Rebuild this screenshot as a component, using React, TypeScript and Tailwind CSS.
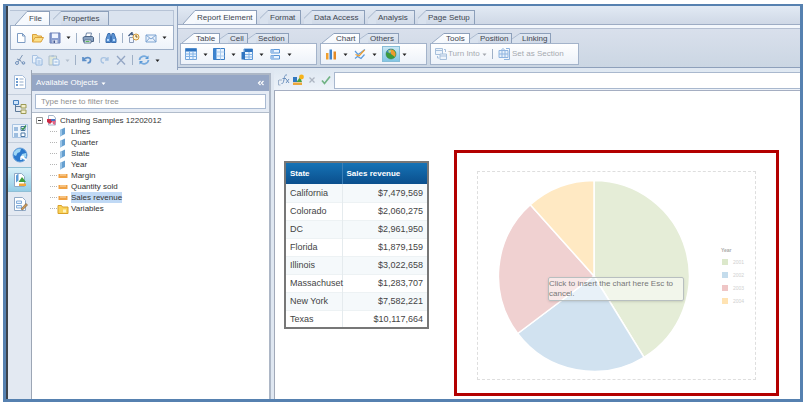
import type { ReactNode } from 'react';

const dimensions = ['Lines', 'Quarter', 'State', 'Year'];
const measures = ['Margin', 'Quantity sold', 'Sales revenue'];

const sales = [
  { state: 'California', revenue: '$7,479,569' },
  { state: 'Colorado', revenue: '$2,060,275' },
  { state: 'DC', revenue: '$2,961,950' },
  { state: 'Florida', revenue: '$1,879,159' },
  { state: 'Illinois', revenue: '$3,022,658' },
  { state: 'Massachuset', revenue: '$1,283,707' },
  { state: 'New York', revenue: '$7,582,221' },
  { state: 'Texas', revenue: '$10,117,664' },
];

const legend = [
  { year: '2001', color: 'bg-[#dce8cb]' },
  { year: '2002', color: 'bg-[#c4dcec]' },
  { year: '2003', color: 'bg-[#efc6c6]' },
  { year: '2004', color: 'bg-[#ffe3b3]' },
];

function Icon({ children, className = '' }: { children: ReactNode; className?: string }) {
  return (
    <svg viewBox="0 0 12 12" className={`w-3 h-3 shrink-0 ${className}`} fill="none" strokeWidth="1" aria-hidden="true">
      {children}
    </svg>
  );
}

function Tool({ label, children, className = '' }: { label: string; children: ReactNode; className?: string }) {
  return (
    <button type="button" aria-label={label} className={`flex items-center justify-center shrink-0 ${className}`}>
      {children}
    </button>
  );
}

function Caret({ className = 'fill-[#222]' }: { className?: string }) {
  return (
    <svg viewBox="0 0 5 5" className={`w-[5px] h-[5px] shrink-0 ${className}`} aria-hidden="true">
      <path d="M.5 1.5h4L2.5 4z" />
    </svg>
  );
}

function Separator() {
  return <span className="w-px h-2.5 shrink-0 bg-[#9fb0c6]" />;
}

function Tab({ label, active = false, className = '' }: { label: string; active?: boolean; className?: string }) {
  return (
    <button type="button" className={`flex items-stretch shrink-0 whitespace-nowrap text-[#3f4650] ${className}`}>
      <svg viewBox="0 0 12 15" preserveAspectRatio="none" className={`h-full shrink-0 ${active ? 'w-3' : 'w-2'}`} aria-hidden="true">
        {active ? (
          <>
            <path d="M0 15 12 0V15z" fill="#f6f9fd" />
            <path d="M0 15 12 .5" stroke="#8c9fba" fill="none" />
          </>
        ) : (
          <>
            <path d="M0 15V9L12 0V15z" fill="#d9e2ee" />
            <path d="M0 9 12 .5" stroke="#9aabc2" fill="none" />
          </>
        )}
      </svg>
      <span
        className={`flex-1 flex items-center pl-0.5 border-t border-r border-[#8c9fba] ${
          active ? 'bg-linear-to-b from-white to-[#f1f6fc]' : 'bg-linear-to-b from-[#e1e8f2] to-[#d0dae8]'
        }`}
      >
        {label}
      </span>
    </button>
  );
}

function ToolGroup({ tabs, children, className = '' }: { tabs: ReactNode; children: ReactNode; className?: string }) {
  return (
    <div className={`shrink-0 flex flex-col ${className}`}>
      <div className="h-2.5 flex">{tabs}</div>
      <div className="h-[22px] flex items-center border border-[#a3b3ca] bg-linear-to-b from-white to-[#edf2f9]">{children}</div>
    </div>
  );
}

function FilePanel() {
  return (
    <div className="w-[164px] shrink-0 mt-1 ml-0.5 flex flex-col">
      <div className="h-[15px] flex pl-[5px] border-t border-r border-[#b6c3d6] bg-[#dae3ef]">
        <Tab label="File" active className="w-[35px]" />
        <Tab label="Properties" className="w-[56px] ml-[3px]" />
      </div>
      <div className="h-[25px] flex items-center gap-[5px] pl-1 border border-[#9fb0c8] bg-linear-to-b from-white to-[#eef3fa]">
        <Tool label="New">
          <Icon><path d="M2.5 1.5h5l2.500 2.500v6.500h-7.500zM7.500 1.500v2.500H10" fill="#fff" stroke="#7d9cc4" /></Icon>
        </Tool>
        <Tool label="Open">
          <Icon>
            <path d="M.5 10V2.500h4l1 1.500h4V6" fill="#f7d678" stroke="#dba13c" />
            <path d="M.5 10 3 5.500h8.500L9 10z" fill="#fbe08a" stroke="#dba13c" />
          </Icon>
        </Tool>
        <Tool label="Save">
          <Icon>
            <path d="M1 1h10v10H1z" fill="#8b9fd0" stroke="#6a7fb5" />
            <path d="M3 1.500h6V6H3z" fill="#eef3ff" />
            <path d="M3.500 8h5v3h-5z" fill="#d5dcec" />
            <path d="M4.500 8.500h1.500V11H4.500z" fill="#42568f" />
          </Icon>
        </Tool>
        <Caret />
        <Separator />
        <Tool label="Print">
          <Icon>
            <path d="M3.500 5 4.500 1h5l-1 4" fill="#fff" stroke="#7188a8" />
            <path d="M1 5.500 3 4.500h7.500l1 1v4h-10z" fill="#8aa3c2" stroke="#4e6788" />
            <path d="M2.500 8h6.500v3H2z" fill="#fff" stroke="#5e7696" />
            <path d="M3.500 9.500h4" stroke="#5cb85c" />
          </Icon>
        </Tool>
        <Separator />
        <Tool label="Find">
          <Icon>
            <path d="M3 1.500h2l.5 3.500v5.500H1V7zM9 1.500H7L6.500 5v5.500H11V7z" fill="#5b93d4" stroke="#3b6fb0" />
            <path d="M2 8h2M8 8h2" stroke="#b9dcff" strokeWidth="2" />
          </Icon>
        </Tool>
        <Separator />
        <Tool label="History">
          <Icon>
            <path d="M1.500 5.500h4v5h-4z" fill="#eef4ff" stroke="#8a9bb7" />
            <circle cx="8" cy="5" r="3" fill="#fff3cf" stroke="#d39a3c" />
            <path d="M8 3v2h1.500" stroke="#7a5520" />
            <path d="M.5 4 4 .5v2h1.500" stroke="#39547d" strokeWidth="1.300" />
          </Icon>
        </Tool>
        <Tool label="Mail">
          <Icon>
            <path d="M1 3h10v7H1z" fill="#eaf2fc" stroke="#7fa5d2" />
            <path d="m1 3 5 4 5-4M1 10l3.500-4M11 10 7.500 6" stroke="#7fa5d2" />
          </Icon>
        </Tool>
        <Caret />
      </div>
      <div className="h-5 flex items-center gap-[5px] pl-1">
        <Tool label="Cut">
          <Icon>
            <path d="M8.500 1 4 8M7 6.500 3 5M5.500 6l4 4" stroke="#7f97b6" />
            <circle cx="3" cy="9" r="1.500" stroke="#7393bc" />
            <circle cx="9.500" cy="9" r="1.300" stroke="#7393bc" />
          </Icon>
        </Tool>
        <Tool label="Copy">
          <Icon>
            <path d="M1.500 1.500H6L7 3v6H1.500z" fill="#e8f1fb" stroke="#a9c3e2" />
            <path d="M5 4h4.500L11 5.500v5.500H5zM6.500 7h3M6.500 9h3" fill="#e8f1fb" stroke="#93b6de" />
          </Icon>
        </Tool>
        <Tool label="Paste">
          <Icon>
            <path d="M1 2h7.500v9H1z" fill="#dfe6d8" stroke="#aebfcd" />
            <path d="M3.500 1h2.500v2h-2.500z" fill="#b3c5da" />
            <path d="M5 5h4.500L11 6.500V11H5zM6.500 8h3" fill="#eef5fd" stroke="#93b6de" />
          </Icon>
        </Tool>
        <Caret className="fill-[#b3bfce]" />
        <Separator />
        <Tool label="Undo">
          <Icon><path d="M2 3v3.500h3.500M2.500 6C4 3 9.500 2.500 9.500 6c0 2-1.500 3-3 3" stroke="#5d8fc9" strokeWidth="1.700" /></Icon>
        </Tool>
        <Tool label="Redo">
          <Icon><path d="M10 3v3H7M9.500 5.500C8 3 3 3 3 6c0 2 1.500 3 3 3" stroke="#a8c3e2" strokeWidth="1.300" /></Icon>
        </Tool>
        <Tool label="Delete">
          <Icon><path d="m2 2 8 8.500M10 2 2 10.500" stroke="#93a6c4" strokeWidth="1.300" /></Icon>
        </Tool>
        <Separator />
        <Tool label="Refresh">
          <Icon>
            <path d="M1.500 6C2 2 7 1 9 3.500M10.500 6c-.5 4-5.500 5-7.500 2.500" stroke="#76aade" strokeWidth="1.800" />
            <path d="M10.500 1.500V5H7zM1.500 10.500V7H5z" fill="#5797d6" />
          </Icon>
        </Tool>
        <Caret />
      </div>
    </div>
  );
}

function RibbonPanel() {
  return (
    <div className="flex-1 min-w-0 flex flex-col ml-[3px] border-l border-[#93a5c0]">
      <div className="h-[19px] flex pt-1 pl-[5px] border-b border-[#9dacc4] bg-linear-to-b from-[#e2eaf4] to-[#cfd8e6]">
        <Tab label="Report Element" active className="w-[74px]" />
        <Tab label="Format" className="w-[41px] ml-[3px]" />
        <Tab label="Data Access" className="w-[61px] ml-[3px]" />
        <Tab label="Analysis" className="w-[47px] ml-[3px]" />
        <Tab label="Page Setup" className="w-[57px] ml-[3px]" />
      </div>
      <div className="h-1 bg-[#f3f7fc] border-b border-[#b4bfd2]" />
      <div className="h-[39px] flex items-start gap-[3px] pt-1 pl-0.5 border-b border-[#8ea0bb] bg-linear-to-b from-[#d9e0ec] to-[#cbd6e3]">
        <ToolGroup
          className="w-[137px]"
          tabs={
            <>
              <Tab label="Table" active className="w-[38px] ml-0.5" />
              <Tab label="Cell" className="w-[28px]" />
              <Tab label="Section" className="w-[41px]" />
            </>
          }
        >
          <div className="flex gap-[5px] pl-1">
            <div className="flex items-center gap-1.5">
              <Tool label="Vertical table">
                <Icon>
                  <path d="M.5 .5h11v11H.5z" fill="#eaf4ff" stroke="#72a5dc" />
                  <path d="M.5 .5h11v3H.5z" fill="#2f74c0" />
                  <path d="M.5 6h11M.5 8.500h11M4.500 3v8.500M8 3v8.500" stroke="#82b3e6" />
                </Icon>
              </Tool>
              <Caret />
            </div>
            <div className="flex items-center gap-1.5">
              <Tool label="Horizontal table">
                <Icon>
                  <path d="M.5 .5h11v11H.5z" fill="#eaf4ff" stroke="#3b7dc4" />
                  <path d="M.5 .5h3v11h-3z" fill="#3d84d0" />
                  <path d="M3.500 4h8M3.500 8h8M7.500 .5v11" stroke="#a9cbee" />
                </Icon>
              </Tool>
              <Caret />
            </div>
            <div className="flex items-center gap-1.5">
              <Tool label="Cross table">
                <Icon>
                  <path d="M3 1h8.500v10.500H3z" fill="#eaf4ff" stroke="#5b96d6" />
                  <path d="M3.500 1h8v3h-8zM.5 4h3.500v7.500H.5z" fill="#2f74c0" />
                  <path d="M4 6.500h7.500M4 9h7.500M8 4v7.500" stroke="#82b3e6" />
                </Icon>
              </Tool>
              <Caret />
            </div>
            <div className="flex items-center gap-1.5">
              <Tool label="Form">
                <Icon>
                  <path d="M2 1.500h8.500v3.500H2zM2 7.500h8.500V11H2z" fill="#eaf4ff" stroke="#5b96d6" />
                  <path d="M2 1.500h3v3.500H2zM2 7.500h3V11H2z" fill="#9bc0ea" />
                </Icon>
              </Tool>
              <Caret />
            </div>
          </div>
        </ToolGroup>

        <ToolGroup
          className="w-[107px]"
          tabs={
            <>
              <Tab label="Chart" active className="w-[38px] ml-0.5" />
              <Tab label="Others" className="w-[39px]" />
            </>
          }
        >
          <div className="flex items-center gap-1.5 pl-1">
            <Tool label="Column chart">
              <Icon>
                <path d="M1 5h2.500v6.500H1z" fill="#f0a030" />
                <path d="M4.500 1.500h2.500v10H4.500z" fill="#3f83cc" />
                <path d="M8.500 3.500H11v8H8.500z" fill="#e58a25" />
              </Icon>
            </Tool>
            <Caret />
            <Tool label="Line chart">
              <Icon>
                <path d="m1 3 3 3.500 3-2 4-3" stroke="#5d9bdc" strokeWidth="1.200" />
                <path d="M1 10.500l2.500-2L7 10.500l3.500-4" stroke="#5d9bdc" strokeWidth="1.200" />
                <path d="m1.500 6.500 3.500 1.500L10.500 2" stroke="#ef9d2c" strokeWidth="1.200" />
              </Icon>
            </Tool>
            <Caret />
          </div>
          <Tool label="Pie chart" className="w-[18px] h-4 ml-[5px] border border-[#86bdd8] bg-linear-to-b from-[#c8e7f4] to-[#83c6e4]">
            <Icon>
              <circle cx="6" cy="6" r="5" fill="#3c9c3b" stroke="#2b7c43" strokeWidth=".5" />
              <path d="M6 6 1.500 4A5 5 0 0 1 7 1z" fill="#3e86c9" />
              <path d="M6 6 5 1.500a5 5 0 0 1 5 7.500z" fill="#ef9b2d" />
              <path d="M3 2.500 5.500 2l.5 2-2 1z" fill="#b5e07a" />
            </Icon>
          </Tool>
          <span className="pl-0.5"><Caret /></span>
        </ToolGroup>

        <ToolGroup
          className="w-[149px]"
          tabs={
            <>
              <Tab label="Tools" active className="w-[38px] ml-0.5" />
              <Tab label="Position" className="w-[42px]" />
              <Tab label="Linking" className="w-[39px]" />
            </>
          }
        >
          <button type="button" className="flex items-center gap-px pl-1 text-[#a5a9b0] whitespace-nowrap">
            <Icon>
              <path d="M.5 .5h7v6h-7zM.5 2.500h7" fill="#eef4fb" stroke="#a7c0dc" />
              <path d="M5 6h6.500v5.500H5zM5 8h6.500" fill="#eef4fb" stroke="#a7c0dc" />
              <path d="M9 1.500h1.500V4M2.500 8v2H4" stroke="#a7c0dc" />
            </Icon>
            <span className="w-[33px] text-left">Turn Into</span>
            <Caret className="fill-[#a5a9b0]" />
          </button>
          <span className="px-[5px] flex"><Separator /></span>
          <button type="button" className="flex items-center gap-0.5 text-[#a5a9b0] whitespace-nowrap">
            <Icon>
              <path d="M1 2.500h9v7H1zM1 6h9M4 2.500v7M7 2.500v7" fill="#e6f0fb" stroke="#8fb4df" />
              <path d="M8 .5h3.500v11H6M5 0v3M3.500 1.500 5 3l1.500-1.500" stroke="#8fb4df" />
            </Icon>
            Set as Section
          </button>
        </ToolGroup>
      </div>
    </div>
  );
}

function SideBar() {
  return (
    <nav aria-label="Panels" className="w-6 shrink-0 bg-[#e3e9f2] border-r border-[#9ca6b5] flex flex-col">
      <Tool label="Document summary" className="h-[25px] border-b border-[#c3cddb]">
        <svg viewBox="0 0 16 16" className="w-4 h-4" fill="none">
          <path d="M2.500 1.500h8l3 3v10h-11z" fill="#fff" stroke="#a9bfdb" />
          <path d="M4 5h2M4 8h2M4 11h2" stroke="#3c7ac0" strokeWidth="1.500" />
          <path d="M7.500 5h4M7.500 8h4M7.500 11h4" stroke="#8fa9c9" />
        </svg>
      </Tool>
      <Tool label="Navigation map" className="h-6 border-b border-[#c3cddb]">
        <svg viewBox="0 0 16 16" className="w-4 h-4" fill="none">
          <path d="M3.500 5v7.500H9M3.500 7.500H9" stroke="#5c7898" />
          <path d="M1.500 1.500h5v4h-5z" fill="#cfe4fa" stroke="#467fbd" />
          <path d="M9 5.500h5v3.500H9zM9 11h5v3.500H9z" fill="#f2eecb" stroke="#9c9a55" />
        </svg>
      </Tool>
      <Tool label="Input controls" className="h-6 border-b border-[#c3cddb]">
        <svg viewBox="0 0 16 16" className="w-4 h-4" fill="none">
          <path d="M.5 1.500h15v13H.5z" fill="#edf4fc" stroke="#a9c4e2" />
          <path d="M2 5h4M2 7h4M2 11h4M2 13h4" stroke="#4f86c2" />
          <path d="M9 3.500h4v4H9zM9 10h4v3.500H9z" fill="#fff" stroke="#4d78a5" />
          <path d="m9.500 5 1.500 1.500L14 2.500" stroke="#2f8c4c" strokeWidth="1.300" />
        </svg>
      </Tool>
      <Tool label="Web services" className="h-6">
        <svg viewBox="0 0 16 16" className="w-4 h-4" fill="none">
          <circle cx="8" cy="8" r="7" fill="#2a78cd" stroke="#6ba3da" />
          <path d="M2 5c2-3 5-4 7-3L8 5 5.500 6 4 9 2 8zM10 7l4-1v4l-3 3-2-3z" fill="#9ed6f5" />
          <path d="M9 9.500 14.500 13M9 9.500V13M9 9.500h3" stroke="#fff" strokeWidth="1.500" />
        </svg>
      </Tool>
      <Tool label="Available objects" className="h-[25px] border-y border-[#8fbfd6] bg-linear-to-b from-[#d7eff8] to-[#94cde6]">
        <svg viewBox="0 0 16 16" className="w-4 h-4" fill="none">
          <path d="M2.500 1.500h7l3 3v10h-10z" fill="#fff" stroke="#90a9c6" />
          <path d="M4 3.500v7l2.500-2V1.500z" fill="#5d9cd8" />
          <path d="m10 5 4 5H6.500z" fill="#3e9e3e" />
          <path d="M7 11.500h7V14H7z" fill="#f1a83b" />
        </svg>
      </Tool>
      <Tool label="Document structure" className="h-6 border-b border-[#c3cddb]">
        <svg viewBox="0 0 16 16" className="w-4 h-4" fill="none">
          <path d="M2.500 1.500h8l3 3v10h-11z" fill="#fff" stroke="#90a9c6" />
          <path d="M4.500 5h5v2.500h-5zM4.500 9.500h5V12h-5z" fill="#e3effb" stroke="#84addb" />
          <path d="m9 13 5-5.500 1.500 1.500-5 5z" fill="#d29b55" stroke="#776043" strokeWidth=".7" />
        </svg>
      </Tool>
    </nav>
  );
}

function ObjectTree() {
  return (
    <ul className="flex-1 bg-white pt-0.5 text-[#333] leading-[11px]">
      <li>
        <div className="flex items-center h-[11px] pl-1">
          <svg viewBox="0 0 7 7" className="w-[7px] h-[7px]" fill="none">
            <path d="M.5 .5h6v6h-6z" fill="#fff" stroke="#969696" />
            <path d="M2 3.500h3" stroke="#333" />
          </svg>
          <Icon className="ml-[3px]">
            <path d="M2.500 .5h5L9.500 3v7h-7z" fill="#fff" stroke="#a4b4ca" />
            <path d="M1 4h5v3l-2 2-3-2z" fill="#cc2945" />
            <path d="m6 6 4-1-1 5-2-1z" fill="#e26386" />
            <path d="M5 4h4v2H5z" fill="#4872c0" />
          </Icon>
          <span className="ml-0.5">Charting Samples 12202012</span>
        </div>
        <ul>
          {dimensions.map(name => (
            <li key={name} className="flex items-center h-[11px] pl-[18px]">
              <span className="w-[7px] border-t border-dotted border-[#b5b5b5]" />
              <svg viewBox="0 0 12 10" className="w-3 h-2.5">
                <path d="M3 3 8 .500V7L3 9.500z" fill="#659fd0" />
                <path d="M3 3 5 2v6.500l-2 1z" fill="#9ac4e6" />
              </svg>
              <span className="ml-0.5">{name}</span>
            </li>
          ))}
          {measures.map(name => (
            <li key={name} className="flex items-center h-[11px] pl-[18px]">
              <span className="w-[7px] border-t border-dotted border-[#b5b5b5]" />
              <svg viewBox="0 0 12 10" className="w-3 h-2.5">
                <path d="M1.500 3h9v4h-9z" fill="#f0a245" />
                <path d="M4 3v2M6 3v2M8 3v2" stroke="#fff0d5" strokeWidth=".8" />
              </svg>
              <span className={name === 'Sales revenue' ? 'ml-0.5 bg-[#c0d9f5]' : 'ml-0.5'}>{name}</span>
            </li>
          ))}
          <li className="flex items-center h-[11px] pl-[18px]">
            <span className="w-[7px] border-t border-dotted border-[#b5b5b5]" />
            <svg viewBox="0 0 12 10" className="w-3 h-2.5">
              <path d="M1 9.500v-8h3.500l1 1.500H11v6.500z" fill="#f9d25a" stroke="#d9a128" />
              <path d="M6 5.500h3v3H6z" fill="#fff3bd" />
            </svg>
            <span className="ml-0.5">Variables</span>
          </li>
        </ul>
      </li>
    </ul>
  );
}

function ObjectsPanel() {
  return (
    <aside className="w-[239px] shrink-0 mt-[3px] flex flex-col border-t-2 border-r-2 border-[#adb7c6]">
      <div className="h-4 flex items-center gap-[3px] pl-1 pr-1 bg-[#95a6c5] text-white">
        <h2>Available Objects</h2>
        <Caret className="fill-white" />
        <button type="button" aria-label="Collapse panel" className="ml-auto">
          <svg viewBox="0 0 8 8" className="w-2 h-2" fill="none" stroke="#fff" strokeWidth="1.200">
            <path d="M3.500 2 1.500 4l2 2M6.500 2 4.500 4l2 2" />
          </svg>
        </button>
      </div>
      <div className="h-[22px] flex items-center px-[3px] bg-[#e6ecf5] border-b border-[#b1bccb]">
        <input
          type="text"
          aria-label="Filter tree"
          placeholder="Type here to filter tree"
          className="w-full h-[15px] px-[5px] bg-white border border-[#a9bad2] outline-none placeholder:text-[#8f8f8f]"
        />
      </div>
      <ObjectTree />
    </aside>
  );
}

function FormulaBar() {
  return (
    <div className="h-[21px] flex items-center pl-1 gap-0.5 border-b border-[#a5aec2] bg-linear-to-b from-[#dfe8f2] to-[#edf2f9]">
      <Tool label="Formula editor">
        <Icon>
          <path d="M.5 6v5h2M1 6h3" stroke="#9fb2cb" />
          <path d="M9 1C6.500 .5 6.500 3 6 5.500S5 10 3.500 9.500M4.500 4.500H8M8 5l3 4M11 5 8 9" stroke="#6d91be" />
        </Icon>
      </Tool>
      <Tool label="Create variable">
        <Icon>
          <path d="M1 3h4v5H1z" fill="#3278c0" />
          <path d="M4.500 8 8 3l2 5z" fill="#46a144" />
          <path d="M1 8.500h9V11H1z" fill="#eca63a" />
          <circle cx="9.500" cy="3" r="2.400" fill="#f6b21a" />
        </Icon>
      </Tool>
      <Tool label="Cancel">
        <Icon><path d="m3.500 3.500 5 5M8.500 3.500l-5 5" stroke="#adb5c2" strokeWidth="1.300" /></Icon>
      </Tool>
      <Tool label="Validate">
        <Icon><path d="m2 6.500 2.500 3L10 2.500" stroke="#71b384" strokeWidth="1.700" /></Icon>
      </Tool>
      <input type="text" aria-label="Formula" className="flex-1 min-w-0 h-[17px] px-1 bg-white border border-r-0 border-[#a9b8ce] outline-none" />
    </div>
  );
}

function SalesTable() {
  return (
    <table className="w-[145px] shrink-0 mt-[70px] ml-[9px] table-fixed border-collapse border-2 border-[#777] text-[#444]">
      <thead>
        <tr className="h-[22px] bg-linear-to-b from-[#1675b8] to-[#0b4f8d] text-white text-left">
          <th className="w-[57px] pl-1 font-bold border-r border-[#3b80b8]">State</th>
          <th className="pl-1 font-bold">Sales revenue</th>
        </tr>
      </thead>
      <tbody className="text-[9px] leading-3">
        {sales.map(row => (
          <tr key={row.state} className="h-[18px] bg-white odd:bg-[#f5f9fb] border-b border-[#edf2f4]">
            <td className="pl-1 border-r border-[#e5ebee] whitespace-nowrap">{row.state}</td>
            <td className="pr-1 text-right">{row.revenue}</td>
          </tr>
        ))}
      </tbody>
    </table>
  );
}

function ChartPreview() {
  return (
    <section className="flex-1 min-w-0 mt-[59px] ml-[25px] mr-[21px] p-5 pt-[18px] pb-[13px] border-[3px] border-[#b30000]">
      <div className="h-[209px] flex items-center border border-dashed border-[#dedede]">
        <div className="relative shrink-0 ml-5">
          <svg viewBox="-96 -96 192 192" className="w-48 h-48" stroke="#fff" strokeWidth="1.500" role="img" aria-label="Sales revenue by year">
            <path d="M0 0V-95.500A95.500 95.500 0 0 1 50 81.300z" fill="#e5edd7" />
            <path d="M0 0 50 81.300A95.500 95.500 0 0 1-76.300 57.500z" fill="#d1e2f0" />
            <path d="M0 0-76.300 57.500A95.500 95.500 0 0 1-63.700-71.200z" fill="#f0d1d1" />
            <path d="M0 0-63.700-71.200A95.500 95.500 0 0 1 0-95.500z" fill="#ffe9c3" />
          </svg>
          <div role="tooltip" className="absolute left-[50px] top-[97px] w-[136px] h-6 border border-[#b8bfc0] rounded-xs bg-white/50 shadow-sm text-[#777] leading-[10px] pt-px">
            Click to insert the chart here Esc to cancel.
          </div>
        </div>
        <div className="ml-auto w-[34px] shrink-0 text-[5px] leading-[6px] text-[#d0d0d0]">
          <p className="font-bold text-[#aaa] mb-1.5">Year</p>
          <ul className="flex flex-col gap-[7px]">
            {legend.map(item => (
              <li key={item.year} className="flex items-center gap-[5px]">
                <span className={`w-1.5 h-1.5 ml-px ${item.color}`} />
                {item.year}
              </li>
            ))}
          </ul>
        </div>
      </div>
    </section>
  );
}

export default function App() {
  return (
    <div className="min-h-screen flex bg-white pt-1 px-[3px] pb-0.5 font-['Liberation_Sans',Arial,sans-serif] text-[8px] leading-[10px]">
      <div className="flex-1 min-w-0 flex flex-col border-[3px] border-t-2 border-[#5681b0]">
        <div className="flex-1 flex flex-col border-l-2 border-[#3c434c] bg-[#dfe7f1]">
          <header className="h-16 flex shrink-0">
            <FilePanel />
            <RibbonPanel />
          </header>
          <div className="flex-1 flex">
            <SideBar />
            <ObjectsPanel />
            <main className="flex-1 min-w-0 flex flex-col ml-[3px]">
              <FormulaBar />
              <div className="flex-1 flex items-start bg-white border-l border-[#a1a9b8]">
                <SalesTable />
                <ChartPreview />
              </div>
            </main>
          </div>
        </div>
      </div>
    </div>
  );
}
